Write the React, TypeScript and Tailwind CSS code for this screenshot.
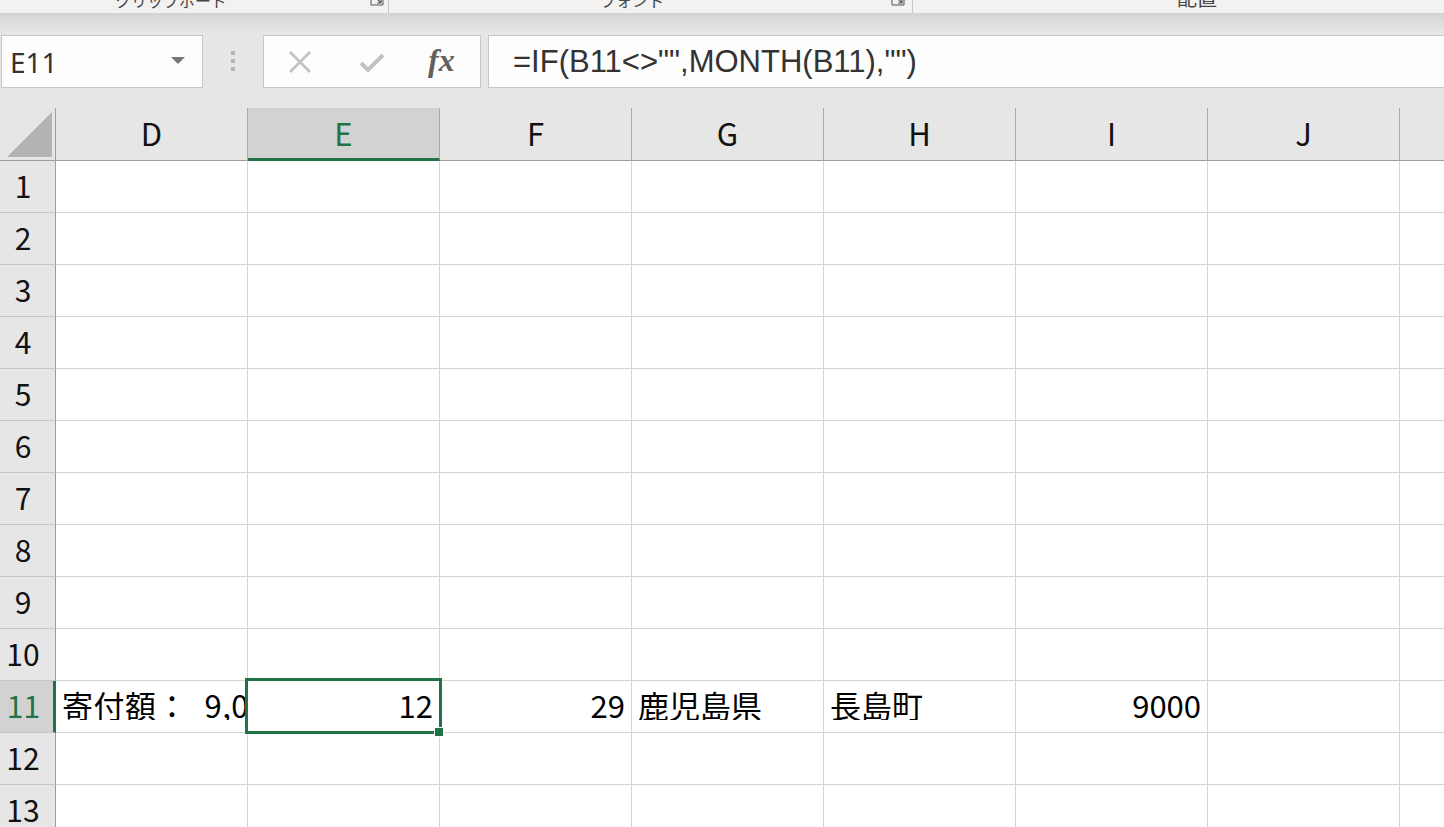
import React from "react";

const COLS = ["D", "E", "F", "G", "H", "I", "J", "K"];
const ROWS = [1, 2, 3, 4, 5, 6, 7, 8, 9, 10, 11, 12, 13];

const GRID_FONT = "font-['Noto_Sans_CJK_JP','Noto_Sans',sans-serif]";

function Launcher() {
  return (
    <svg width="14" height="14" viewBox="0 0 14 14" className="-mt-[8px]">
      <path d="M1 1 H13 V13 H1 Z" fill="none" stroke="#555" strokeWidth="1" />
      <path d="M4 4 L11 11 M7 11 H11 V7" fill="none" stroke="#555" strokeWidth="1.2" />
    </svg>
  );
}

function Ribbon() {
  return (
    <div className="h-[13px] shrink-0 bg-[#f3f2f1] flex overflow-hidden font-['Noto_Sans_CJK_JP',sans-serif] text-[16px] leading-[16px] text-[#444]">
      <div className="w-[388px] flex shrink-0">
        <span className="ml-[115px] -mt-[8px]">クリップボード</span>
        <div className="ml-auto mr-[4px]">
          <Launcher />
        </div>
      </div>
      <div className="w-[1px] bg-[#c8c8c8] shrink-0" />
      <div className="w-[523px] flex shrink-0">
        <span className="ml-[211px] -mt-[8px]">フォント</span>
        <div className="ml-auto mr-[7px]">
          <Launcher />
        </div>
      </div>
      <div className="w-[1px] bg-[#c8c8c8] shrink-0" />
      <div className="flex shrink-0">
        <span className="ml-[264px] text-[20px] leading-[20px] -mt-[12px]">配置</span>
      </div>
    </div>
  );
}

function FormulaBar() {
  return (
    <div className="h-[95px] shrink-0 bg-[linear-gradient(to_bottom,#d3d3d3_0px,#e6e6e6_18px)] pt-[22px] flex items-start">
      <div className="ml-[1px] w-[202px] h-[53px] shrink-0 border border-[#c6c6c6] bg-[#fdfdfd] flex items-center">
        <span className="pl-[8px] font-['Noto_Sans',sans-serif] text-[28px] text-[#333] leading-none">E11</span>
        <svg width="14" height="7" viewBox="0 0 14 7" className="ml-auto mr-[17px] mb-[3px]">
          <path d="M0 0 H14 L7 7 Z" fill="#777" />
        </svg>
      </div>
      <div className="w-[60px] h-[53px] shrink-0 flex flex-col items-center justify-center gap-[4px] pb-[1px]">
        <div className="w-[4px] h-[4px] bg-[#b4b4b4]" />
        <div className="w-[4px] h-[4px] bg-[#b4b4b4]" />
        <div className="w-[4px] h-[4px] bg-[#b4b4b4]" />
      </div>
      <div className="w-[218px] h-[53px] shrink-0 border border-[#c6c6c6] bg-[#fdfdfd] flex items-center">
        <svg width="24" height="22" viewBox="0 0 24 22" className="ml-[24px]">
          <path d="M2 1 L22 21 M22 1 L2 21" stroke="#c2c2c2" strokeWidth="2.6" fill="none" />
        </svg>
        <svg width="26" height="22" viewBox="0 0 26 22" className="ml-[47px] mt-[2px]">
          <path d="M2 11 L9 18 L24 3" stroke="#c2c2c2" strokeWidth="4" fill="none" />
        </svg>
        <span className="ml-[43px] font-['Liberation_Serif',serif] italic font-semibold text-[32px] leading-none text-[#606060] -mt-[4px]">fx</span>
      </div>
      <div className="ml-[7px] w-[980px] h-[53px] shrink-0 border border-[#c6c6c6] bg-[#fdfdfd] flex items-center">
        <span className="pl-[24px] font-['Liberation_Sans',sans-serif] text-[31px] text-[#333] leading-none whitespace-nowrap">
          =IF(B11&lt;&gt;"",MONTH(B11),"")
        </span>
      </div>
    </div>
  );
}

function HeaderRow() {
  return (
    <div className={`flex h-[53px] shrink-0 ${GRID_FONT}`}>
      <div className="w-[56px] shrink-0 h-full border-r border-b border-[#9e9e9e] bg-[#e6e6e6] flex items-end justify-end pr-[3px] pb-[3px]">
        <svg width="45" height="45" viewBox="0 0 45 45">
          <path d="M45 0 L45 45 L0 45 Z" fill="#b4b4b4" />
        </svg>
      </div>
      {COLS.map((c) => {
        const sel = c === "E";
        return (
          <div
            key={c}
            className={
              sel
                ? "w-[192px] shrink-0 h-full bg-[#d2d2d2] border-r border-r-[#ababab] border-b-[3px] border-b-[#217346] flex items-center justify-center text-[31px] text-[#217346] pt-[1px]"
                : "w-[192px] shrink-0 h-full bg-[#e6e6e6] border-r border-r-[#ababab] border-b border-b-[#9e9e9e] flex items-center justify-center text-[31px] text-[#111] pb-[1px]"
            }
          >
            {c}
          </div>
        );
      })}
    </div>
  );
}

type Cell = { text: string; align: "left" | "right" };

const ROW11: Record<string, Cell> = {
  D: { text: "寄付額： 9,000", align: "left" },
  E: { text: "12", align: "right" },
  F: { text: "29", align: "right" },
  G: { text: "鹿児島県", align: "left" },
  H: { text: "長島町", align: "left" },
  I: { text: "9000", align: "right" },
};

function BodyRow({ n }: { n: number }) {
  const active = n === 11;
  return (
    <div className={`relative flex h-[52px] shrink-0 ${GRID_FONT} ${active ? "z-10" : ""}`}>
      <div
        className={
          active
            ? "w-[56px] shrink-0 h-full bg-[#d2d2d2] border-r-[3px] border-r-[#217346] border-b border-b-[#c6c6c6] flex items-center justify-center pr-[6px] pb-[2px] text-[30px] text-[#217346]"
            : "w-[56px] shrink-0 h-full bg-[#e6e6e6] border-r border-r-[#9e9e9e] border-b border-b-[#c6c6c6] flex items-center justify-center pr-[9px] pb-[2px] text-[30px] text-[#111]"
        }
      >
        {n}
      </div>
      {COLS.map((c) => {
        const cell = active ? ROW11[c] : undefined;
        const isSel = active && c === "E";
        return (
          <div
            key={c}
            className={`relative w-[192px] shrink-0 h-full bg-white border-r border-b border-[#d4d4d4] flex items-center pb-[5px] ${isSel ? "z-10" : ""}`}
          >
            {cell && (
              <div
                className={
                  cell.align === "right"
                    ? "w-full overflow-hidden whitespace-nowrap text-right pr-[6px] text-[31px] text-black leading-none"
                    : c === "D"
                    ? "w-full overflow-hidden whitespace-nowrap text-left pl-[6px] text-[31px] text-black leading-none tracking-[0.5px] [word-spacing:9px]"
                    : "w-full overflow-hidden whitespace-nowrap text-left pl-[6px] text-[31px] text-black leading-none"
                }
              >
                {cell.text}
              </div>
            )}
            {isSel && (
              <>
                <div className="absolute -left-[3px] -top-[3px] w-[197px] h-[56px] border-[3px] border-[#217346] pointer-events-none" />
                <div className="absolute left-[186px] top-[46px] w-[10px] h-[10px] bg-[#217346] border border-white" />
              </>
            )}
          </div>
        );
      })}
    </div>
  );
}

export default function App() {
  return (
    <div className="w-[1444px] h-[827px] overflow-hidden bg-[#e6e6e6] flex flex-col">
      <Ribbon />
      <FormulaBar />
      <HeaderRow />
      {ROWS.map((n) => (
        <BodyRow key={n} n={n} />
      ))}
    </div>
  );
}
